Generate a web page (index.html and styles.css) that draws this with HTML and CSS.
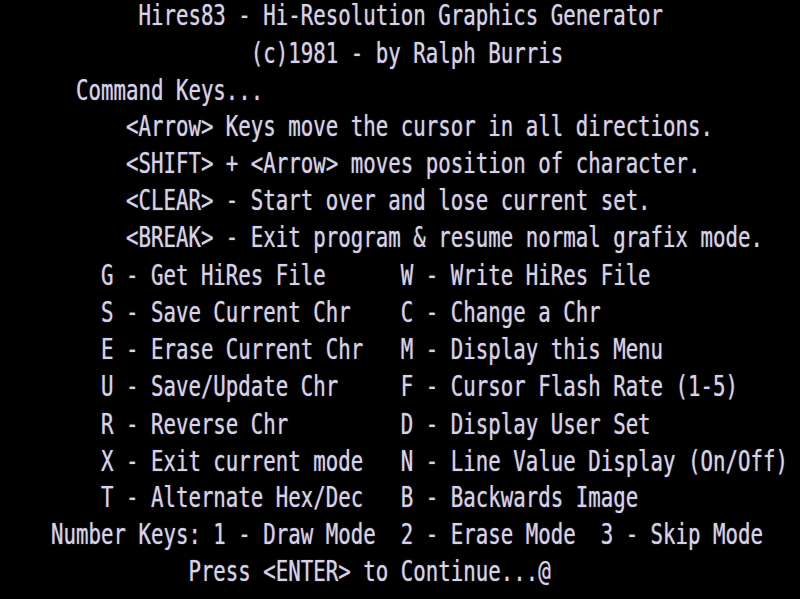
FILE: index.html
```html
<!DOCTYPE html>
<html>
<head>
<meta charset="utf-8">
<title>Hires83</title>
<link rel="stylesheet" href="styles.css">
</head>
<body>
<main class="screen">
<div class="ln">           Hires83 - Hi-Resolution Graphics Generator</div>
<div class="ln">                    (c)1981 - by Ralph Burris</div>
<div class="ln">      Command Keys...</div>
<div class="ln">          &lt;Arrow&gt; Keys move the cursor in all directions.</div>
<div class="ln">          &lt;SHIFT&gt; + &lt;Arrow&gt; moves position of character.</div>
<div class="ln">          &lt;CLEAR&gt; - Start over and lose current set.</div>
<div class="ln">          &lt;BREAK&gt; - Exit program &amp; resume normal grafix mode.</div>
<div class="ln">        G - Get HiRes File      W - Write HiRes File</div>
<div class="ln">        S - Save Current Chr    C - Change a Chr</div>
<div class="ln">        E - Erase Current Chr   M - Display this Menu</div>
<div class="ln">        U - Save/Update Chr     F - Cursor Flash Rate (1-5)</div>
<div class="ln">        R - Reverse Chr         D - Display User Set</div>
<div class="ln">        X - Exit current mode   N - Line Value Display (On/Off)</div>
<div class="ln">        T - Alternate Hex/Dec   B - Backwards Image</div>
<div class="ln">    Number Keys: 1 - Draw Mode  2 - Erase Mode  3 - Skip Mode</div>
<div class="ln">               Press &lt;ENTER&gt; to Continue...<span class="cursor">@</span></div>
</main>
</body>
</html>
```
FILE: styles.css
```css
html, body {
  margin: 0;
  padding: 0;
  background: #000;
  width: 800px;
  height: 599px;
  overflow: hidden;
}
.screen {
  padding-left: 1px;
  padding-top: 1.7px;
  font-family: "DejaVu Sans Mono", monospace;
  font-size: 20.76px;
  line-height: 21px;
  color: #d6d2ea;
  transform: scaleY(1.33);
  transform-origin: top left;
  text-shadow: 0 0 1px rgba(214, 210, 234, 0.6);
}
.ln {
  white-space: pre;
  height: 27.92px;
}
.cursor {
  color: #d6d2ea;
}
```
